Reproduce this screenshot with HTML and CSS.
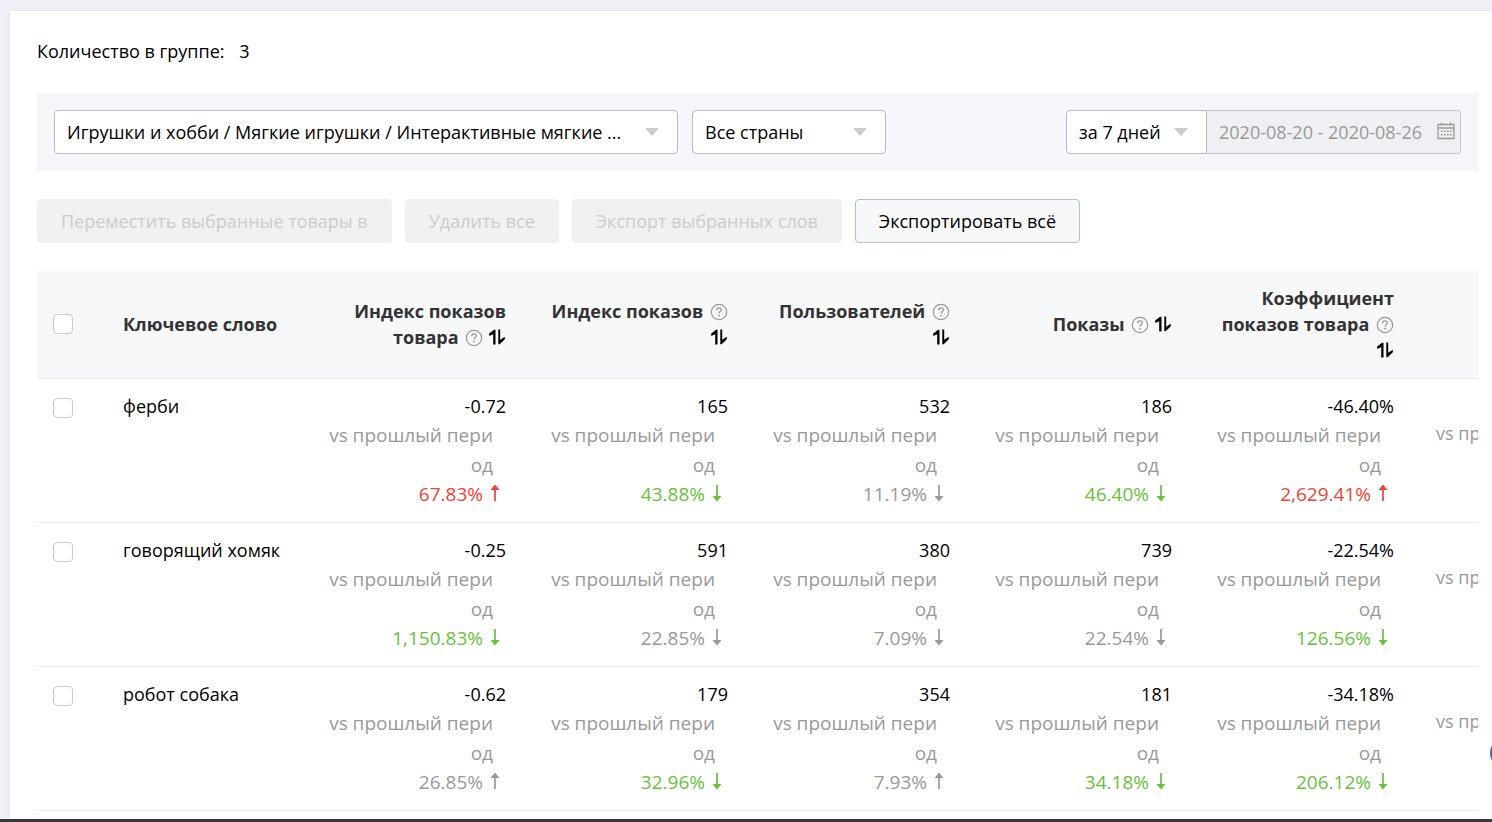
FILE: index.html
```html
<!DOCTYPE html>
<html lang="ru">
<head>
  <meta charset="UTF-8">
  <meta name="viewport" content="width=device-width, initial-scale=1.0">
  <title>Ключевые слова</title>
  <link rel="stylesheet" href="styles.css">
</head>
<body>

  <!-- Иконки -->
  <svg class="sprite" aria-hidden="true">
    <symbol id="help" viewBox="0 0 18 18">
      <circle cx="9" cy="9" r="7.7" fill="none" stroke="#999" stroke-width="1.2"/>
      <path d="M6.7 7.2c0-1.5 1-2.3 2.3-2.3s2.3.8 2.3 2c0 1.6-2.2 1.7-2.2 3.6" fill="none" stroke="#999" stroke-width="1.3"/>
      <circle cx="9.1" cy="12.7" r=".9" fill="#999"/>
    </symbol>
    <symbol id="sort" viewBox="0 0 18 16">
      <path d="M5.2 15.5V5.2L1.2 7V4.6L6 .8h1.5v14.7zM10.3 .5h1.9v10.3l4.6-3v2.5l-5.1 4.9h-1.4z" fill="#000"/>
    </symbol>
    <symbol id="up" viewBox="0 0 10 18">
      <path d="M5 17V3" stroke="currentColor" stroke-width="1.7"/>
      <path d="M5 .5L9.5 6h-9z" fill="currentColor"/>
    </symbol>
    <symbol id="down" viewBox="0 0 10 18">
      <path d="M5 1v14" stroke="currentColor" stroke-width="1.7"/>
      <path d="M5 17.5L9.5 12h-9z" fill="currentColor"/>
    </symbol>
  </svg>

  <main class="card">
    <p class="count">Количество в группе: <span>3</span></p>

    <div class="filters">
      <div class="select category">
        <select aria-label="Категория">
          <option>Игрушки и хобби / Мягкие игрушки / Интерактивные мягкие ...</option>
        </select>
      </div>
      <div class="select country">
        <select aria-label="Страна">
          <option>Все страны</option>
        </select>
      </div>
      <div class="period">
        <div class="select days">
          <select aria-label="Период">
            <option>за 7 дней</option>
          </select>
        </div>
        <div class="dates">
          <input type="text" aria-label="Даты" value="2020-08-20 - 2020-08-26" disabled>
          <svg width="18" height="18" viewBox="0 0 18 18" fill="none" stroke="#999" stroke-width="1.3">
            <path d="M1 2.5h16v14H1zM1 6h16M4.5 .5v3M13.5 .5v3"/>
            <path d="M4 9.2h11M4 12.8h11" stroke-width="1.6" stroke-dasharray="1.7 1.3"/>
          </svg>
        </div>
      </div>
    </div>

    <div class="actions">
      <button type="button" disabled>Переместить выбранные товары в</button>
      <button type="button" disabled>Удалить все</button>
      <button type="button" disabled>Экспорт выбранных слов</button>
      <button type="button">Экспортировать всё</button>
    </div>

    <div class="table-wrap">
      <table>
        <colgroup>
          <col class="col-check">
          <col class="col-word">
          <col span="6" class="col-num">
        </colgroup>
        <thead>
          <tr>
            <th><input type="checkbox" aria-label="Выбрать все"></th>
            <th class="word">Ключевое слово</th>
            <th>Индекс показов товара <svg class="help"><use href="#help"/></svg> <svg class="sort"><use href="#sort"/></svg></th>
            <th>Индекс показов <svg class="help"><use href="#help"/></svg> <svg class="sort"><use href="#sort"/></svg></th>
            <th>Пользователей <svg class="help"><use href="#help"/></svg> <svg class="sort"><use href="#sort"/></svg></th>
            <th>Показы <svg class="help"><use href="#help"/></svg> <svg class="sort"><use href="#sort"/></svg></th>
            <th>Коэффициент показов товара <svg class="help"><use href="#help"/></svg> <svg class="sort"><use href="#sort"/></svg></th>
            <th></th>
          </tr>
        </thead>
        <tbody id="rows"></tbody>
      </table>
    </div>
  </main>

  <div class="bubble"></div>
  <div class="bottom-line"></div>

  <script>
    // слово, затем [значение, изменение, стрелка, цвет]
    var data = [
      ["ферби", ["-0.72", "67.83%", "up", "red"], ["165", "43.88%", "down", "green"], ["532", "11.19%", "down", "gray"], ["186", "46.40%", "down", "green"], ["-46.40%", "2,629.41%", "up", "red"]],
      ["говорящий хомяк", ["-0.25", "1,150.83%", "down", "green"], ["591", "22.85%", "down", "gray"], ["380", "7.09%", "down", "gray"], ["739", "22.54%", "down", "gray"], ["-22.54%", "126.56%", "down", "green"]],
      ["робот собака", ["-0.62", "26.85%", "up", "gray"], ["179", "32.96%", "down", "green"], ["354", "7.93%", "up", "gray"], ["181", "34.18%", "down", "green"], ["-34.18%", "206.12%", "down", "green"]]
    ];

    var html = "";
    data.forEach(function (row) {
      html += `<tr>
        <td><input type="checkbox" aria-label="${row[0]}"></td>
        <td class="word">${row[0]}</td>`;
      row.slice(1).forEach(function (c) {
        html += `<td>
          <div class="value">${c[0]}</div>
          <div class="vs">vs прошлый период</div>
          <div class="change ${c[3]}">${c[1]}<svg class="arrow"><use href="#${c[2]}"/></svg></div>
        </td>`;
      });
      html += `<td class="last"><div class="vs">vs прошлый период</div></td></tr>`;
    });
    document.getElementById("rows").innerHTML = html;
  </script>

</body>
</html>
```
FILE: styles.css
```css
* {
  box-sizing: border-box;
}
body {
  margin: 0;
  height: 100vh;
  display: flex;
  flex-direction: column;
  overflow: hidden;
  background: #eff0f5;
  color: #000;
  font: 18px/28px "Open Sans", sans-serif;
}
.sprite {
  display: none;
}
.card {
  flex: 1;
  min-height: 0;
  overflow: hidden;
  margin: 11px 0 0 10px;
  padding: 26px 14px 0 27px;
  background: #fff;
  box-shadow: 0 0 4px rgba(0,0,0,0.06);
}
.count {
  margin: 0 0 28px;
}
.count span {
  margin-left: 10px;
}

/* Фильтры */
.filters {
  display: flex;
  gap: 14px;
  padding: 17px;
  background: #f4f6fa;
}
.select {
  position: relative;
}
.select::after {
  content: "";
  position: absolute;
  right: 19px;
  top: 18px;
  border: 7px solid transparent;
  border-top: 8px solid #ccc;
  border-bottom: 0;
  pointer-events: none;
}
select,
.dates input {
  appearance: none;
  display: block;
  width: 100%;
  height: 44px;
  padding: 0 12px;
  border: 1px solid #b6bec8;
  border-radius: 4px;
  background: #fff;
  color: #000;
  font: inherit;
}
.category {
  flex: 0 1 624px;
}
.country {
  flex: 0 0 194px;
}
.period {
  display: flex;
  margin-left: auto;
}
.days {
  width: 141px;
}
.days select {
  border-radius: 4px 0 0 4px;
}
.dates {
  position: relative;
  width: 254px;
}
.dates input {
  border-color: #c6c8cb;
  border-left: 0;
  border-radius: 0 4px 4px 0;
  background: #eff0f3;
  color: #999;
}
.dates svg {
  position: absolute;
  right: 6px;
  top: 12px;
}

/* Кнопки */
.actions {
  display: flex;
  gap: 13px;
  margin: 28px 0;
}
button {
  height: 44px;
  padding: 0 23px;
  border: 1px solid #b6bec8;
  border-radius: 4px;
  background: #f7f8fa;
  color: #000;
  font: inherit;
  white-space: nowrap;
}
button:disabled {
  border-color: #f1f1f1;
  background: #f1f1f1;
  color: #ccc;
}

/* Таблица */
.table-wrap {
  overflow: hidden;
}
table {
  width: 1595px;
  table-layout: fixed;
  border-collapse: separate;
  border-spacing: 0;
}
.col-check {
  width: 70px;
}
.col-word {
  width: 193px;
}
.col-num {
  width: 222px;
}
th, td {
  padding: 13px 16px 14px;
  border-bottom: 1px solid #ebecf0;
  text-align: right;
  vertical-align: top;
}
th {
  height: 108px;
  background: #f7f8fa;
  color: #333;
  line-height: 26px;
  vertical-align: middle;
}
.word {
  text-align: left;
}
td.word {
  white-space: nowrap;
}
input[type="checkbox"] {
  appearance: none;
  display: block;
  width: 20px;
  height: 20px;
  margin: 0;
  border: 1px solid #ccc;
  border-radius: 4px;
  background: #fff;
}
td input[type="checkbox"] {
  margin-top: 6px;
}
.help {
  width: 18px;
  height: 18px;
  margin-left: 2px;
  vertical-align: -3px;
}
.sort {
  width: 18px;
  height: 16px;
  vertical-align: -1px;
}
.vs {
  margin: 0 13px 0 7px;
  color: #999;
  font-size: 19px;
  line-height: 30px;
  word-break: break-all;
}
.last {
  padding-left: 26px;
  text-align: left;
}
.last .vs {
  margin: 0;
  padding-top: 26px;
  font-size: 18px;
  white-space: nowrap;
}
.change {
  padding-right: 6px;
  font-size: 19px;
}
.arrow {
  width: 10px;
  height: 18px;
  margin-left: 7px;
  vertical-align: -1px;
}
.red {
  color: #f04134;
}
.green {
  color: #67c23a;
}
.gray {
  color: #999;
}

/* Кнопка чата у края окна */
.bubble {
  position: fixed;
  right: -30px;
  bottom: 53px;
  width: 32px;
  height: 32px;
  border-radius: 50%;
  background: #3a6fc4;
}
.bottom-line {
  height: 3px;
  background: #39373a;
}
```
